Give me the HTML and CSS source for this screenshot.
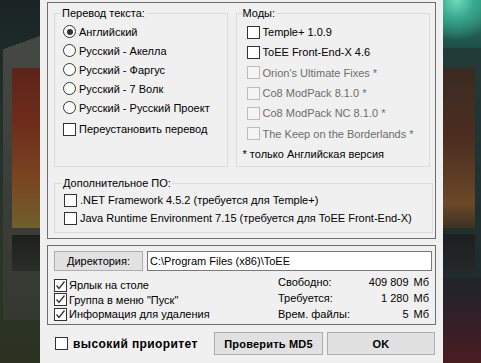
FILE: index.html
```html
<!DOCTYPE html>
<html lang="ru">
<head>
<meta charset="utf-8">
<title>Установка ToEE</title>
<link rel="stylesheet" href="styles.css">
</head>
<body>
<div class="screen">
  <div class="decor decor-left"></div>
  <div class="dialog">
    <div class="frame frame-top">
      <div class="groups">
        <fieldset class="group group-lang">
          <legend>Перевод текста:</legend>
          <label class="opt"><span class="radio checked"></span>Английский</label>
          <label class="opt"><span class="radio"></span>Русский - Акелла</label>
          <label class="opt"><span class="radio"></span>Русский - Фаргус</label>
          <label class="opt"><span class="radio"></span>Русский - 7 Волк</label>
          <label class="opt"><span class="radio"></span>Русский - Русский Проект</label>
          <label class="opt opt-reinstall"><span class="check"></span>Переустановить перевод</label>
        </fieldset>
        <fieldset class="group group-mods">
          <legend>Моды:</legend>
          <label class="mod"><span class="check"></span>Temple+ 1.0.9</label>
          <label class="mod"><span class="check"></span>ToEE Front-End-X 4.6</label>
          <label class="mod disabled"><span class="check"></span>Orion's Ultimate Fixes *</label>
          <label class="mod disabled"><span class="check"></span>Co8 ModPack 8.1.0 *</label>
          <label class="mod disabled"><span class="check"></span>Co8 ModPack NC 8.1.0 *</label>
          <label class="mod disabled"><span class="check"></span>The Keep on the Borderlands *</label>
          <div class="note">* только Английская версия</div>
        </fieldset>
      </div>
      <fieldset class="group group-extra">
        <legend>Дополнительное ПО:</legend>
        <label class="extra"><span class="check"></span>.NET Framework 4.5.2 (требуется для Temple+)</label>
        <label class="extra"><span class="check"></span>Java Runtime Environment 7.15 (требуется для ToEE Front-End-X)</label>
      </fieldset>
    </div>
    <div class="frame frame-dir">
      <div class="dir-row">
        <button class="btn btn-dir">Директория:</button>
        <div class="input">C:\Program Files (x86)\ToEE</div>
      </div>
      <div class="dir-bottom">
        <div class="checks">
          <label class="small-opt"><span class="check on"><svg viewBox="0 0 11 11"><polyline points="1.5,5.5 4,8.5 9.5,1.5"/></svg></span>Ярлык на столе</label>
          <label class="small-opt"><span class="check on"><svg viewBox="0 0 11 11"><polyline points="1.5,5.5 4,8.5 9.5,1.5"/></svg></span>Группа в меню "Пуск"</label>
          <label class="small-opt"><span class="check on"><svg viewBox="0 0 11 11"><polyline points="1.5,5.5 4,8.5 9.5,1.5"/></svg></span>Информация для удаления</label>
        </div>
        <div class="stats">
          <span class="st-label">Свободно:</span><span class="st-val">409 809</span><span class="st-unit">Мб</span>
          <span class="st-label">Требуется:</span><span class="st-val">1 280</span><span class="st-unit">Мб</span>
          <span class="st-label">Врем. файлы:</span><span class="st-val">5</span><span class="st-unit">Мб</span>
        </div>
      </div>
    </div>
    <div class="footer">
      <label class="priority"><span class="check"></span>высокий приоритет</label>
      <button class="btn btn-md5">Проверить MD5</button>
      <button class="btn btn-ok">OK</button>
    </div>
  </div>
  <div class="decor decor-right"></div>
</div>
</body>
</html>
```

FILE: styles.css
```css
html, body {
  margin: 0;
  padding: 0;
  background: #1a2422;
}

body {
  font-family: "Liberation Sans", Arial, sans-serif;
  font-size: 11px;
  color: #000;
}

.screen {
  display: flex;
  width: 481px;
  height: 363px;
  overflow: hidden;
}

.decor {
  height: 363px;
  flex: none;
}

.decor-left {
  width: 40px;
  background:
    linear-gradient(180deg, #5c2418 0%, #6e2d1b 35%, #7a4522 70%, #70602c 100%) 12px 68px / 28px 160px no-repeat,
    linear-gradient(180deg, #1d201e, #2a2d29) 12px 235px / 28px 36px no-repeat,
    linear-gradient(160deg, rgba(0, 0, 0, 0) 0 40%, #454842 40%) 3px 36px / 37px 20px no-repeat,
    linear-gradient(180deg, #454842 0%, #3b3f39 50%, #343830 100%) 3px 55px / 37px 265px no-repeat,
    linear-gradient(180deg, #1a2523 0%, #22302c 30%, #2c3528 70%, #2b3222 100%);
}

.decor-right {
  width: 38px;
  background:
    radial-gradient(ellipse 40px 40px at 35% 0%, #6fdcbf 0%, #3aa88e 45%, rgba(40, 120, 100, 0) 100%) 0 0 / 38px 50px no-repeat,
    linear-gradient(180deg, #3a2a22 0%, #4c2e20 45%, #6a4828 85%, #3c3222 100%) 0 68px / 32px 160px no-repeat,
    linear-gradient(180deg, #1c2020, #242828) 0 234px / 32px 40px no-repeat,
    linear-gradient(180deg, #223a38 0%, #1e2d2c 100%) 0 48px / 38px 230px no-repeat,
    linear-gradient(180deg, #2b8c76 0%, #1c4a44 14%, #1a2a2a 55%, #24222a 80%, #4a1c22 100%);
}

.dialog {
  width: 403px;
  flex: none;
  box-sizing: border-box;
  background: #f0f0f0;
  padding: 2px 7px 0 7px;
  display: flex;
  flex-direction: column;
}

.frame {
  border: 1px solid #6e6e6e;
  box-sizing: border-box;
}

.frame-top {
  height: 237px;
  padding: 4px 5px 0 6px;
}

.groups {
  display: flex;
  gap: 8px;
  height: 160px;
}

.group {
  margin: 0;
  border: 1px solid #dcdcdc;
  box-sizing: border-box;
  min-width: 0;
  padding: 0;
}

.group legend {
  padding: 0 1px;
  line-height: 13px;
}

.group-lang {
  width: 174px;
  padding: 2px 0 0 8px;
}

.group-lang legend {
  margin-left: -2px;
}

.group-mods {
  width: 195px;
  padding: 2px 0 0 6px;
}

.group-mods legend {
  margin-left: -1px;
}

.opt, .mod, .extra, .small-opt, .priority {
  display: flex;
  align-items: center;
  gap: 3px;
  white-space: nowrap;
}

.opt {
  height: 19px;
}

.opt-reinstall {
  height: 22px;
  margin-top: 1px;
}

.mod {
  height: 20.33px;
  margin-left: 4px;
}

.mod.disabled {
  color: #6d6d6d;
}

.note {
  height: 20.33px;
  line-height: 20px;
}

.radio {
  width: 13px;
  height: 13px;
  box-sizing: border-box;
  border: 1px solid #333;
  border-radius: 50%;
  background: #fff;
  flex: none;
  display: flex;
  align-items: center;
  justify-content: center;
}

.radio.checked::after {
  content: "";
  width: 6px;
  height: 6px;
  border-radius: 50%;
  background: #333;
}

.check {
  width: 13px;
  height: 13px;
  box-sizing: border-box;
  border: 1px solid #333;
  background: #fff;
  flex: none;
  display: flex;
  align-items: center;
  justify-content: center;
}

.mod.disabled .check {
  border-color: #bcbcbc;
  background: #f4f4f4;
}

.check svg {
  width: 11px;
  height: 11px;
}

.check polyline {
  fill: none;
  stroke: #333;
  stroke-width: 1.3;
}

.group-extra {
  width: 379px;
  height: 56px;
  margin-top: 10px;
  padding: 1px 0 0 9px;
}

.group-extra legend {
  margin-left: -2px;
}

.extra {
  height: 18px;
}

.frame-dir {
  height: 80px;
  margin-top: 6px;
  padding: 5px 3px 0 6px;
}

.dir-row {
  display: flex;
  gap: 4px;
  height: 20px;
}

.btn {
  font-family: inherit;
  font-size: 11px;
  color: #000;
  background: #e1e1e1;
  border: 1px solid #adadad;
  box-sizing: border-box;
  padding: 0;
  margin: 0;
}

.btn-dir {
  width: 89px;
  height: 20px;
}

.input {
  flex: 1;
  height: 20px;
  box-sizing: border-box;
  border: 1px solid #7a7a7a;
  background: #fff;
  line-height: 18px;
  padding-left: 2px;
  white-space: nowrap;
}

.dir-bottom {
  display: flex;
  justify-content: space-between;
  margin-top: 3px;
}

.checks {
  padding-top: 4px;
}

.small-opt {
  height: 14.5px;
  gap: 2px;
}

.stats {
  display: grid;
  grid-template-columns: 1fr auto auto;
  grid-auto-rows: 16px;
  align-items: center;
  width: 151px;
  margin-right: 3px;
}

.st-val {
  text-align: right;
}

.st-unit {
  padding-left: 5px;
}

.footer {
  display: flex;
  align-items: center;
  height: 23px;
  margin-top: 7px;
  padding: 0 1px 0 8px;
}

.priority {
  font-weight: bold;
  font-size: 12px;
  letter-spacing: 0.4px;
  gap: 5px;
}

.btn-md5, .btn-ok {
  height: 23px;
  font-weight: bold;
  letter-spacing: 0.2px;
}

.btn-md5 {
  width: 109px;
  margin-left: auto;
}

.btn-ok {
  width: 108px;
  margin-left: 4px;
}
```
